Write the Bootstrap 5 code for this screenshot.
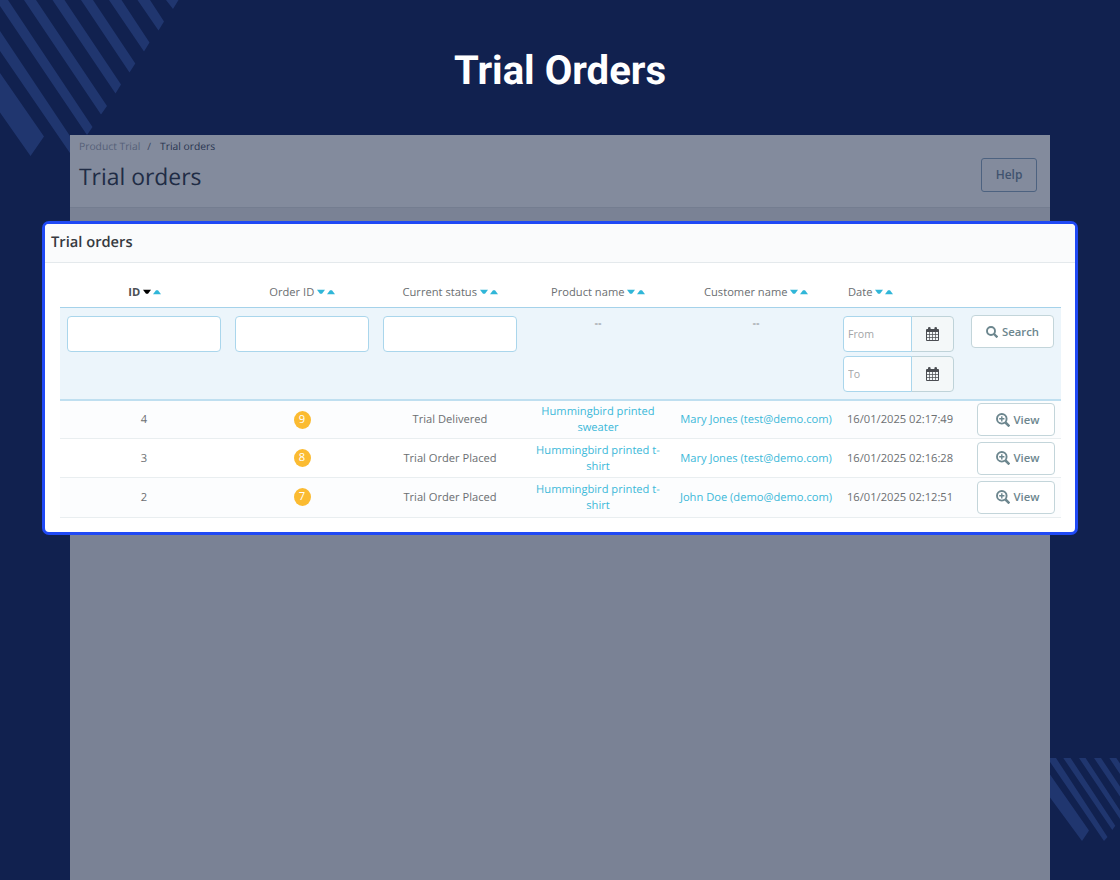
<!DOCTYPE html>
<html lang="en">
<head>
    <meta charset="UTF-8">
    <meta name="viewport" content="width=device-width, initial-scale=1.0">
    <title>Trial Orders</title>
    <!-- Bootstrap CSS -->
    <link href="https://cdn.jsdelivr.net/npm/bootstrap@5.3.0/dist/css/bootstrap.min.css" rel="stylesheet">
    <style>
        body {
            background: #11214f;
            color: #6c6f72;
            font-family: "Open Sans", "Noto Sans", sans-serif;
            font-size: 11.15px;
            line-height: 16px;
            text-rendering: geometricPrecision;
        }
        .stage { height: 880px; }
        .stripes { inset: 0; z-index: 0; }
        .page-title {
            height: 135px;
            font: 700 40.1px/48px Roboto, sans-serif;
            padding-top: 47px;
            color: #fff;
        }
        .admin-page { width: 980px; background: #7a8295; z-index: 1; }
        .page-head { height: 73px; background: #838b9d; border-bottom: 1px solid #747d90; padding: 3px 13px 0 9px; }
        .crumbs { font-size: 10.3px; color: #556078; padding-top: 1px; }
        .crumbs .slash { margin: 0 9px 0 7px; color: #3d4860; }
        .crumbs .current { color: #27334f; }
        .page-head h1 { font-size: 22.9px; line-height: 32px; color: #202c45; margin-top: 6px; }
        .btn-help { width: 56px; height: 34px; font-size: 12px; font-weight: 600; color: #40536f; border: 1px solid #4d6280; border-radius: 3px; margin-top: 20px; }
        .orders-card { margin: 13px -28px 0; border: 3px solid #1f49f5; border-radius: 7px; height: 314px; background: #fff; overflow: hidden; }
        .orders-head { height: 39px; padding: 8px 6px; background: #fafbfc; border-bottom: 1px solid #e4e9ec; font-size: 14.7px; line-height: 20px; font-weight: 600; color: #363a41; }
        .grid-row { display: grid; grid-template-columns: 168px 148px 148px 148px 168px 118px 103px; width: 1001px; margin-left: 15px; text-align: center; }
        .sort-row { height: 45px; padding-top: 22px; border-bottom: 1px solid #a5d2ea; }
        .sort-row svg { width: 18px; height: 6px; margin-left: 2.5px; vertical-align: 1px; fill: #30b6d8; }
        .sort-row .active-sort { padding-left: 1px; color: #4c4f53; font-weight: 700; }
        .active-sort svg path:first-child { fill: #000; }
        .filter-row { height: 93px; padding-top: 8px; background: #ecf5fb; border-bottom: 2px solid #bfdff0; }
        .filter-cell { padding: 0 7px; }
        .filter-row .form-control { height: 36px; border: 1px solid #aad6ec; border-radius: 4px; font-size: 10.6px; padding: 0 4px; background: #fff; }
        .filter-row .form-control::placeholder { color: #a3a5a7; opacity: 1; }
        .date-box { width: 111px; margin-left: 3px; }
        .date-box .input-group-text { width: 43px; background: #f4f8f9; border: 1px solid #bfd3d9; border-radius: 4px; padding: 0; }
        .date-box .form-control { border-radius: 4px 0 0 4px; }
        .btn-tool { height: 33px; background: #fff; border: 1px solid #c3d5da; border-radius: 4px; padding: 0; font-size: 11.3px; line-height: 16px; font-weight: 600; color: #6c868e; }
        .btn-search { width: 83px; margin: -1px 0 0 13px; }
        .btn-view { width: 78px; margin: -1px 0 0 19px; padding-left: 3px; }
        .order-row { height: 39px; align-items: center; padding-top: 1px; border-bottom: 1px solid #e9eef0; }
        .order-row:first-child { height: 38px; }
        .order-row:last-child { height: 40px; padding-top: 0; }
        .order-row + .order-row .product-cell { padding-top: 1px; }
        .order-row:nth-child(odd) { background: #fcfdfe; }
        .order-row a { color: #3cb9d9; text-decoration: none; }
        .order-date { padding-left: 7px; }
        .order-no { width: 17px; height: 18px; line-height: 18px; margin-top: -1px; border-radius: 50%; background: #fbbb31; color: #fff; }
    </style>
</head>
<body>
    <div class="stage position-relative overflow-hidden d-flex flex-column align-items-center">
        <!-- Background stripes -->
        <svg class="stripes position-absolute" width="1120" height="880" viewBox="0 0 1120 880" fill="#20366f">
            <path d="M0 73L44 136.5 30.5 156 0 112.5zM0 31L78 148 72 156 0 51zM0 0H8L92.5 127 87 135 0 6zM24 0H36L107 106 101 114.500zM52.500 0H64.500L121 84.500 115.500 93.500zM81 0H93L135.300 63.500 129.500 72.500zM109 0H121.500L149.500 42.500 144 51.500zM137.500 0H150L164 21.500 158.500 30.500zM166 0H178.500L173 9z"/>
            <path d="M1050 774.500L1089 830.500 1082 841 1050 797.500zM1050 758H1056L1107.500 837 1104 841 1050 762zM1063.300 758H1070.600L1115.300 825.700 1112.300 830zM1079 758H1085.600L1120 810.500V819zM1094 758H1101L1120 786.500V796.500zM1109.300 758H1116.300L1120 763.500V774z"/>
        </svg>

        <div class="page-title flex-shrink-0">Trial Orders</div>

        <div class="admin-page flex-grow-1 position-relative">
            <div class="page-head d-flex justify-content-between">
                <div>
                    <div class="crumbs d-flex"><span>Product Trial</span><span class="slash">/</span><span class="current">Trial orders</span></div>
                    <h1 class="fw-normal mb-0">Trial orders</h1>
                </div>
                <button type="button" class="btn btn-help p-0">Help</button>
            </div>

            <div class="orders-card">
                <div class="orders-head">Trial orders</div>
                <div class="grid-row sort-row" id="sort-row"></div>
                <div class="grid-row filter-row">
                    <div class="filter-cell"><input type="text" class="form-control"></div>
                    <div class="filter-cell"><input type="text" class="form-control"></div>
                    <div class="filter-cell"><input type="text" class="form-control"></div>
                    <div>--</div>
                    <div>--</div>
                    <div class="d-flex flex-column">
                        <div class="date-box input-group mb-1">
                            <input type="text" class="form-control" placeholder="From">
                            <span class="input-group-text justify-content-center"><svg width="13" height="14"><use href="#calendar"/></svg></span>
                        </div>
                        <div class="date-box input-group">
                            <input type="text" class="form-control" placeholder="To">
                            <span class="input-group-text justify-content-center"><svg width="13" height="14"><use href="#calendar"/></svg></span>
                        </div>
                    </div>
                    <div class="text-start">
                        <button type="button" class="btn btn-tool btn-search d-flex align-items-center justify-content-center">
                            <svg width="12" height="12" viewBox="0 0 12 12" fill="none" stroke="#6c868e" stroke-width="1.900"><circle cx="5" cy="5" r="4"/><path d="M8 8l3.400 3.400" stroke-width="2.300"/></svg><span class="ms-1">Search</span>
                        </button>
                    </div>
                </div>
                <div id="order-rows"></div>
            </div>
        </div>
    </div>

    <!-- Shared icons -->
    <svg width="0" height="0" class="position-absolute">
        <symbol id="calendar" viewBox="0 0 13 14">
            <path fill="#4a4d52" fill-rule="evenodd" d="M1 2H2V1Q2 0 3.300 0T4.600 1V2H8.400V1Q8.400 0 9.700 0T11 1V2H12Q13 2 13 3V13Q13 14 12 14H1Q0 14 0 13V3Q0 2 1 2zM1 5V7H3.200V5zM3.900 5V7H6.200V5zM6.900 5V7H9.100V5zM9.800 5V7H12V5zM1 7.700V10H3.200V7.700zM3.900 7.700V10H6.200V7.700zM6.900 7.700V10H9.100V7.700zM9.800 7.700V10H12V7.700zM1 10.700V13H3.200V10.700zM3.900 10.700V13H6.200V10.700zM6.900 10.700V13H9.100V10.700zM9.800 10.700V13H12V10.700z"/>
        </symbol>
        <symbol id="zoom-in" viewBox="0 0 14 14">
            <g fill="none" stroke="#6c868e"><circle cx="5.800" cy="5.800" r="4.800" stroke-width="1.900"/><path d="M9.500 9.500l3.900 3.900" stroke-width="2.500"/><path d="M5.800 3.200v5.200M3.200 5.800h5.200" stroke-width="1.400"/></g>
        </symbol>
    </svg>

    <!-- Bootstrap JS -->
    <script src="https://cdn.jsdelivr.net/npm/bootstrap@5.3.0/dist/js/bootstrap.bundle.min.js"></script>
    <script>
        const columns = ["ID", "Order ID", "Current status", "Product name", "Customer name", "Date"];
        const orders = [
            { id: 4, order: 9, status: "Trial Delivered", product: "Hummingbird printed<br>sweater", customer: "Mary Jones (test@demo.com)", date: "16/01/2025 02:17:49" },
            { id: 3, order: 8, status: "Trial Order Placed", product: "Hummingbird printed t-<br>shirt", customer: "Mary Jones (test@demo.com)", date: "16/01/2025 02:16:28" },
            { id: 2, order: 7, status: "Trial Order Placed", product: "Hummingbird printed t-<br>shirt", customer: "John Doe (demo@demo.com)", date: "16/01/2025 02:12:51" }
        ];

        // Column headings with sort arrows
        document.getElementById("sort-row").innerHTML = columns.map(name => `
            <div class="${name === "ID" ? "active-sort" : ""} ${name === "Date" ? "text-start ps-2" : ""}">${name}<svg viewBox="0 0 18 6"><path d="M0 .7H8L5 4.700H3z"/><path d="M10 5.300H18L15 1.300H13z"/></svg></div>
        `).join("");

        // Order rows
        document.getElementById("order-rows").innerHTML = orders.map(o => `
            <div class="grid-row order-row">
                <div>${o.id}</div>
                <div><div class="order-no mx-auto">${o.order}</div></div>
                <div>${o.status}</div>
                <div class="product-cell"><a href="#">${o.product}</a></div>
                <div><a href="#">${o.customer}</a></div>
                <div class="order-date text-start text-nowrap">${o.date}</div>
                <div><button type="button" class="btn btn-tool btn-view d-flex align-items-center justify-content-center"><svg width="14" height="14"><use href="#zoom-in"/></svg><span class="ms-1">View</span></button></div>
            </div>
        `).join("");
    </script>
</body>
</html>
